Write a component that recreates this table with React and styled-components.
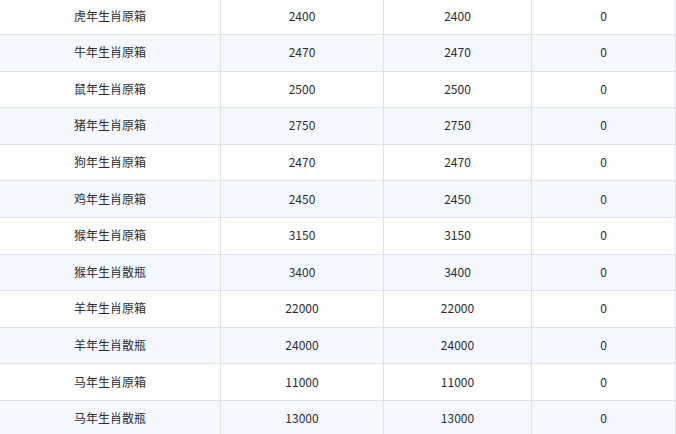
import React from "react";
import styled, { createGlobalStyle } from "styled-components";

const GlobalStyle = createGlobalStyle`
  html, body {
    margin: 0;
    padding: 0;
    background: #fdfdfd;
    overflow: hidden;
  }
`;

const Table = styled.div`
  display: grid;
  grid-template-columns: 221px 163px 148px 144px;
  margin-top: -1.6px;
  font-family: "Microsoft YaHei", "Noto Sans CJK SC", sans-serif;
  font-size: 12px;
  color: #2b2d30;
`;

const Cell = styled.div`
  box-sizing: border-box;
  height: 36.6px;
  padding-bottom: 2px;
  display: flex;
  align-items: center;
  justify-content: center;
  border-bottom: 1px solid #dfe2e7;
  border-right: 1px solid #dfe2e7;
  background: ${props => (props.striped ? "#f5f9ff" : "#fdfdfd")};
`;

const rows = [
  ["虎年生肖原箱", 2400, 2400, 0],
  ["牛年生肖原箱", 2470, 2470, 0],
  ["鼠年生肖原箱", 2500, 2500, 0],
  ["猪年生肖原箱", 2750, 2750, 0],
  ["狗年生肖原箱", 2470, 2470, 0],
  ["鸡年生肖原箱", 2450, 2450, 0],
  ["猴年生肖原箱", 3150, 3150, 0],
  ["猴年生肖散瓶", 3400, 3400, 0],
  ["羊年生肖原箱", 22000, 22000, 0],
  ["羊年生肖散瓶", 24000, 24000, 0],
  ["马年生肖原箱", 11000, 11000, 0],
  ["马年生肖散瓶", 13000, 13000, 0],
];

const App = () => (
  <>
    <GlobalStyle />
    <Table>
      {rows.map((row, i) =>
        row.map((value, j) => (
          <Cell key={`${i}-${j}`} striped={i % 2 === 1}>
            {value}
          </Cell>
        ))
      )}
    </Table>
  </>
);

export default App;
